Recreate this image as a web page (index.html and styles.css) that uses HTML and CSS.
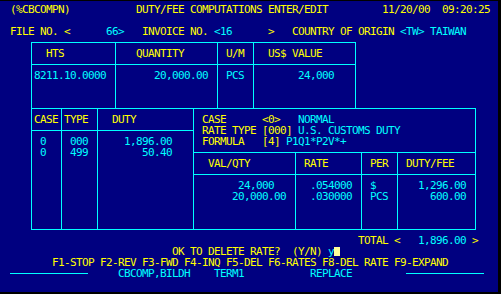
FILE: index.html
```html
<!DOCTYPE html>
<html lang="en">
<head>
    <meta charset="UTF-8">
    <title>DUTY/FEE COMPUTATIONS ENTER/EDIT</title>
    <link rel="stylesheet" href="styles.css">
</head>
<body>
    <div class="screen">
        <div class="row">(%CBCOMPN)           DUTY/FEE COMPUTATIONS ENTER/EDIT         11/20/00  09:20:25</div>
        <div class="row"></div>
        <div class="row">FILE NO. &lt;<span class="val">      66&gt;</span>   INVOICE NO. <span class="val">&lt;16</span>      &gt;   COUNTRY OF ORIGIN <span class="val">&lt;TW&gt; TAIWAN</span></div>

        <!-- HTS line -->
        <div class="hts-table">
            <div class="cell">  HTS</div>
            <div class="cell">   QUANTITY</div>
            <div class="cell"> U/M</div>
            <div class="cell">  US$ VALUE</div>
            <div class="cell val">8211.10.0000</div>
            <div class="cell val">      20,000.00</div>
            <div class="cell val"> PCS</div>
            <div class="cell val">       24,000</div>
        </div>

        <!-- duty by case + rate detail -->
        <div class="rate-table">
            <div class="cell">CASE</div>
            <div class="cell">TYPE</div>
            <div class="cell">  DUTY</div>
            <div class="rate-panel">
                <div class="cell panel-head"> CASE      &lt;0&gt;   <span class="val">NORMAL</span><br> RATE TYPE [000] <span class="val">U.S. CUSTOMS DUTY</span><br> FORMULA   [4] <span class="val">P1Q1*P2V*+</span></div>
                <div class="cell">  VAL/QTY</div>
                <div class="cell"> RATE</div>
                <div class="cell"> PER</div>
                <div class="cell"> DUTY/FEE</div>
                <div class="cell val">       24,000<br>      20,000.00</div>
                <div class="cell val">  .054000<br>  .030000</div>
                <div class="cell val"> $<br> PCS</div>
                <div class="cell val">   1,296.00<br>     600.00</div>
            </div>
            <div class="cell val"> 0<br> 0</div>
            <div class="cell val"> 000<br> 499</div>
            <div class="cell val">    1,896.00<br>       50.40</div>
        </div>

        <div class="row total">                                                          TOTAL &lt;   <span class="val">1,896.00</span> &gt;</div>
        <div class="row">                           OK TO DELETE RATE?  (Y/N) <span class="val">y</span><span class="cursor"></span></div>
        <div class="row">       F1-STOP F2-REV F3-FWD F4-INQ F5-DEL F6-RATES F8-DEL RATE F9-EXPAND</div>
        <div class="row val"><span class="rule"></span>     CBCOMP,BILDH    TERM1           REPLACE         <span class="rule"></span></div>
    </div>
</body>
</html>
```

FILE: styles.css
```css
:root {
    --screen-bg: #000080;
    --yellow: #ffff00;
    --cyan: #00ffff;
}

* {
    margin: 0;
    padding: 0;
    box-sizing: border-box;
}

body {
    background-color: #000;
}

.screen {
    width: 498px;
    height: 291px;
    margin-top: 1px;
    padding: 3px 0 0 10px;
    background-color: var(--screen-bg);
    color: var(--yellow);
    font-family: "DejaVu Sans Mono", "Liberation Mono", monospace;
    font-size: 11px;
    line-height: 11px;
    letter-spacing: -0.6226px;
}

.row {
    height: 11px;
    white-space: pre;
}

.val {
    color: var(--cyan);
}

.hts-table {
    display: grid;
    width: max-content;
    grid-template-columns: 83px 101px 35px 101px;
    grid-template-rows: 21px 43px;
    gap: 1px;
    padding: 1px 1px 0;
    margin: 5px 0 0 21px;
    background-color: var(--cyan);
}

.rate-table {
    display: grid;
    width: max-content;
    grid-template-columns: 29px 35px 95px 281px;
    grid-template-rows: 21px 98px;
    gap: 1px;
    padding: 1px;
    margin: 0 0 5px 21px;
    background-color: var(--cyan);
}

.rate-panel {
    grid-row: span 2;
    display: grid;
    grid-template-columns: 101px 65px 35px 77px;
    grid-template-rows: 43px 21px 54px;
    gap: 1px;
}

.panel-head {
    grid-column: 1 / -1;
    color: var(--yellow);
}

.cell {
    background-color: var(--screen-bg);
    padding: 5px 0 0 2px;
    white-space: pre;
    overflow: hidden;
}

.cursor {
    display: inline-block;
    vertical-align: top;
    width: 6px;
    height: 9px;
    margin-top: 1px;
    background-color: #ffff99;
}

.rule {
    display: inline-block;
    vertical-align: top;
    width: 78px;
    height: 6px;
    border-bottom: 1px solid var(--cyan);
}
```
